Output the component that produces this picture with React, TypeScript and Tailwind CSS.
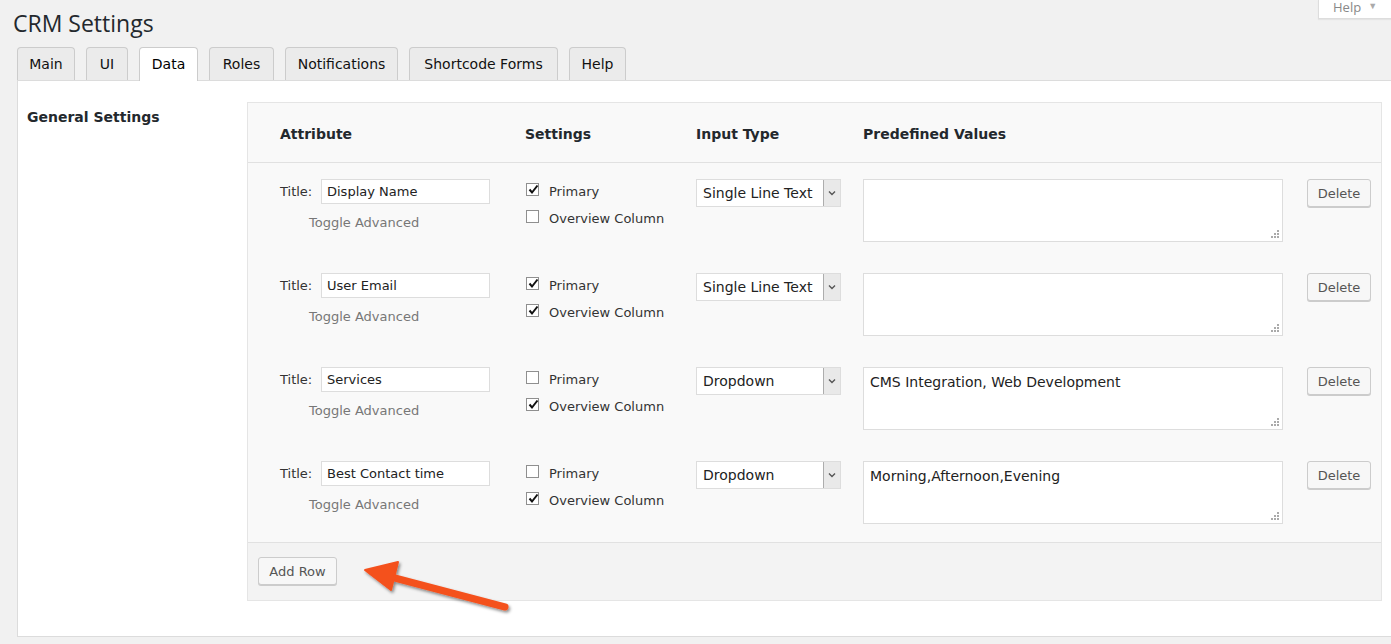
import React from "react";

const font = { fontFamily: '"DejaVu Sans", Verdana, sans-serif' };

function Check({ checked }: { checked: boolean }) {
  return (
    <span className="relative inline-block w-[13px] h-[13px] border border-[#8f8f8f] bg-white shrink-0">
      {checked && (
        <svg className="absolute left-[1px] top-[0px]" width="11" height="11" viewBox="0 0 11 11">
          <path d="M1.5 5.5 L4 8.5 L9.5 1.5" stroke="#111" strokeWidth="2" fill="none" />
        </svg>
      )}
    </span>
  );
}

type Row = {
  title: string;
  primary: boolean;
  overview: boolean;
  type: string;
  values: string;
};

const rows: Row[] = [
  { title: "Display Name", primary: true, overview: false, type: "Single Line Text", values: "" },
  { title: "User Email", primary: true, overview: true, type: "Single Line Text", values: "" },
  { title: "Services", primary: false, overview: true, type: "Dropdown", values: "CMS Integration, Web Development" },
  { title: "Best Contact time", primary: false, overview: true, type: "Dropdown", values: "Morning,Afternoon,Evening" },
];

const tabs: { label: string; w: string }[] = [
  { label: "Main", w: "w-[58px]" },
  { label: "UI", w: "w-[42px]" },
  { label: "Data", w: "w-[59px]" },
  { label: "Roles", w: "w-[65px]" },
  { label: "Notifications", w: "w-[113px]" },
  { label: "Shortcode Forms", w: "w-[149px]" },
  { label: "Help", w: "w-[57px]" },
];

function Grip() {
  return (
    <svg className="absolute right-[3px] bottom-[3px]" width="8" height="8" viewBox="0 0 8 8">
      <rect x="6" y="0" width="2" height="2" fill="#aaa" />
      <rect x="3" y="3" width="2" height="2" fill="#aaa" />
      <rect x="6" y="3" width="2" height="2" fill="#aaa" />
      <rect x="0" y="6" width="2" height="2" fill="#aaa" />
      <rect x="3" y="6" width="2" height="2" fill="#aaa" />
      <rect x="6" y="6" width="2" height="2" fill="#aaa" />
    </svg>
  );
}

function DataRow({ r }: { r: Row }) {
  return (
    <div className="flex h-[94px] pt-[16px] text-[13px] text-[#333]">
      <div className="w-[277px] pl-[32px] shrink-0">
        <div className="flex items-center h-[25px]">
          <span className="w-[41px]">Title:</span>
          <div className="w-[169px] h-[25px] border border-[#dddddd] bg-white flex items-center px-[5px] pt-[1px] text-[#222]">
            {r.title}
          </div>
        </div>
        <div className="pl-[29px] mt-[9px] text-[#777]">Toggle Advanced</div>
      </div>
      <div className="w-[171px] shrink-0 pl-[1px] pt-[3px]">
        <div className="flex items-center h-[14px] gap-[10px]">
          <Check checked={r.primary} />
          <span className="mt-[5px]">Primary</span>
        </div>
        <div className="flex items-center h-[14px] gap-[10px] mt-[13px]">
          <Check checked={r.overview} />
          <span className="mt-[5px]">Overview Column</span>
        </div>
      </div>
      <div className="w-[167px] shrink-0">
        <div className="w-[145px] h-[28px] border border-[#dddddd] bg-white flex items-stretch">
          <div className="flex-1 flex items-center pl-[6px] pt-[1px] text-[14px] text-[#222]">{r.type}</div>
          <div className="w-[17px] bg-[#e9e9e9] border-l border-[#adadad] flex items-center justify-center">
            <svg width="8" height="6" viewBox="0 0 8 6">
              <path d="M1 1.5 L4 4.5 L7 1.5" stroke="#555" strokeWidth="1.4" fill="none" />
            </svg>
          </div>
        </div>
      </div>
      <div className="w-[444px] shrink-0">
        <div className="relative w-[420px] h-[63px] border border-[#dddddd] bg-white px-[6px] pt-[4px] text-[14px] text-[#222]">
          {r.values}
          <Grip />
        </div>
      </div>
      <div className="shrink-0">
        <div className="w-[64px] h-[28px] border border-[#cccccc] rounded-[3px] bg-[#f7f7f7] shadow-[0_1px_0_#ccc] flex items-center justify-center pt-[2px] text-[13px] text-[#555]">
          Delete
        </div>
      </div>
    </div>
  );
}

export default function App() {
  return (
    <div className="relative w-[1391px] h-[644px] bg-[#f1f1f1] overflow-hidden" style={font}>
      <div className="absolute right-0 top-0 w-[73px] h-[19px] bg-white border-l border-b border-[#dddddd] shadow-[0_1px_1px_rgba(0,0,0,0.05)] flex items-start pl-[14px] gap-[7px] text-[13px] leading-[14px] text-[#888]" style={{ fontFamily: '"Open Sans", sans-serif' }}>
        <span>Help</span>
        <span className="text-[9px] leading-[12px] text-[#aaa]">▼</span>
      </div>
      <div className="pl-[13px] pt-[8px] h-[47px] text-[23px] leading-[30px] text-[#23282d]" style={{ fontFamily: '"Open Sans", sans-serif' }}>
        CRM Settings
      </div>
      <div className="flex pl-[17px] gap-[11px] h-[33px] items-end">
        {tabs.map((t) => (
          <div
            key={t.label}
            className={
              t.label === "Data"
                ? `${t.w} h-[34px] border border-b-0 border-[#cccccc] rounded-t-[4px] bg-white text-[14px] text-[#000] flex items-center justify-center relative z-10 -mb-[1px] pb-[1px]`
                : `${t.w} h-[33px] border border-b-0 border-[#cccccc] rounded-t-[4px] bg-[#ebebeb] text-[14px] text-[#111] flex items-center justify-center`
            }
          >
            {t.label}
          </div>
        ))}
      </div>
      <div className="ml-[17px] h-[557px] bg-white border-t border-l border-b border-[#dcdcdc] flex">
        <div className="w-[229px] shrink-0 pl-[9px] pt-[26px] text-[14px] font-bold text-[#23282d]">General Settings</div>
        <div className="mt-[21px] w-[1135px] h-[499px] border border-[#e5e5e5] bg-[#f9f9f9] flex flex-col">
          <div className="h-[60px] flex items-center pt-[4px] border-b border-[#e1e1e1] text-[14px] font-bold text-[#23282d] shrink-0">
            <div className="w-[277px] pl-[32px]">Attribute</div>
            <div className="w-[171px]">Settings</div>
            <div className="w-[167px]">Input Type</div>
            <div>Predefined Values</div>
          </div>
          {rows.map((r) => (
            <DataRow key={r.title} r={r} />
          ))}
          <div className="flex-1 mt-[3px] bg-[#f3f3f3] border-t border-[#e1e1e1] pl-[10px] pt-[14px]">
            <div className="w-[79px] h-[28px] border border-[#cccccc] rounded-[3px] bg-[#f7f7f7] shadow-[0_1px_0_#ccc] flex items-center justify-center pt-[1px] text-[13px] text-[#555]">
              Add Row
            </div>
          </div>
        </div>
      </div>
      <svg className="absolute left-[355px] top-[555px]" width="170" height="70" viewBox="0 0 170 70">
        <defs>
          <filter id="sh" x="-20%" y="-50%" width="140%" height="200%">
            <feDropShadow dx="1.5" dy="2" stdDeviation="1.5" floodColor="#000" floodOpacity="0.45" />
          </filter>
        </defs>
        <g filter="url(#sh)">
          <path d="M150 52 L36 22" stroke="#f4511e" strokeWidth="7" strokeLinecap="round" fill="none" />
          <path d="M10 15 L43 7 L36 35 Z" fill="#f4511e" stroke="#f4511e" strokeWidth="2" strokeLinejoin="round" />
        </g>
      </svg>
    </div>
  );
}
